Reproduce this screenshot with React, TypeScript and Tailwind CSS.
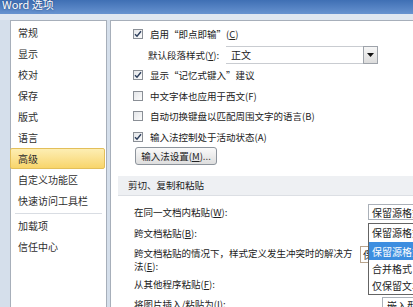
import React from "react";

const F = { fontFamily: '"Noto Sans CJK SC", "Noto Sans", sans-serif' };

function Box({ checked }: { checked?: boolean }) {
  return (
    <div className="w-[10px] h-[10px] border border-[#8a8f96] bg-gradient-to-br from-[#e4e6e9] to-[#fbfbfb] flex items-center justify-center shrink-0">
      {checked && (
        <svg width="8" height="8" viewBox="0 0 8 8">
          <path d="M1 4.2 L3 6.3 L7 1.2" stroke="#2c3e5c" strokeWidth="1.4" fill="none" />
        </svg>
      )}
    </div>
  );
}

function U({ c }: { c: string }) {
  return <span className="underline underline-offset-1">{c}</span>;
}

function CheckRow({ checked, children }: { checked?: boolean; children: React.ReactNode }) {
  return (
    <div className="h-[20.5px] flex items-center gap-[7px] pl-[22px]">
      <Box checked={checked} />
      <span>{children}</span>
    </div>
  );
}

const nav = ["常规", "显示", "校对", "保存", "版式", "语言", "高级", "自定义功能区", "快速访问工具栏"];

export default function App() {
  return (
    <div className="w-[413px] h-[307px] overflow-hidden bg-[#d5dfeb] flex flex-col relative" style={F}>
      <div className="h-[14px] shrink-0 bg-gradient-to-b from-[#3f6fb4] to-[#6793d0] overflow-hidden flex items-start pl-[2px]">
        <span className="text-[11px] leading-[9px] text-white" style={{ textShadow: "0 0 2px #1d3f70" }}>Word 选项</span>
      </div>
      <div className="h-[6px] shrink-0 bg-[#dfe7f1]" />
      <div className="flex flex-1 min-h-0">
        <div className="ml-[10px] w-[97px] bg-white border border-[#a7afba] border-b-0 pt-[1px] flex flex-col text-[10px] text-[#2e2e2e]">
          {nav.map((n) => (
            <div
              key={n}
              className={
                n === "高级"
                  ? "h-[20.5px] mr-[1px] flex items-center pl-[7px] rounded-[2px] border border-[#e3bf5a] bg-gradient-to-b from-[#fdeeb3] to-[#f8d56a] -ml-[1px]"
                  : "h-[21px] flex items-center pl-[7px]"
              }
            >
              {n}
            </div>
          ))}
          <div className="h-[1px] bg-[#d9dde3] mx-[4px] mt-[2px]" />
          <div className="h-[21px] flex items-center pl-[7px] mt-[1px]">加载项</div>
          <div className="h-[21px] flex items-center pl-[7px]">信任中心</div>
        </div>
        <div className="ml-[3px] flex-1 bg-white border-l border-t border-[#a7afba] text-[9.5px] text-[#222] relative">
          <div className="pt-[3px]">
            <CheckRow checked>
              启用“即点即输”(<U c="C" />)
            </CheckRow>
            <div className="h-[20.5px] flex items-center pl-[37px]">
              <span className="w-[78px]">
                默认段落样式(<U c="Y" />):
              </span>
              <div className="w-[152px] h-[18px] flex border-y border-[#c9ccd1]">
                <div className="flex-1 flex items-center pl-[5px] text-[10px]">正文</div>
                <div className="w-[15px] border border-[#9ea3aa] bg-gradient-to-b from-[#f6f6f6] to-[#dcdcdc] flex items-center justify-center -my-[1px]">
                  <svg width="7" height="4" viewBox="0 0 7 4">
                    <path d="M0 0 H7 L3.5 4 Z" fill="#111" />
                  </svg>
                </div>
              </div>
            </div>
            <CheckRow checked>显示“记忆式键入”建议</CheckRow>
            <CheckRow>中文字体也应用于西文(F)</CheckRow>
            <CheckRow>自动切换键盘以匹配周围文字的语言(B)</CheckRow>
            <CheckRow checked>输入法控制处于活动状态(A)</CheckRow>
          </div>
          <div className="ml-[24px] w-[82px] h-[18px] border border-[#8d949c] rounded-[3px] bg-gradient-to-b from-[#fafafa] to-[#dedede] flex items-center justify-center">
            输入法设置(<U c="M" />)...
          </div>
          <div className="mt-[11px] ml-[7px] h-[20px] bg-[#eef0f3] border-b border-[#dcdfe4] flex items-center pl-[10px]">
            剪切、复制和粘贴
          </div>
          <div className="pl-[23px] mt-[6px]">
            <div className="h-[20px] flex items-center justify-between">
              <span>
                在同一文档内粘贴(<U c="W" />):
              </span>
              <div className="w-[50px] h-[16px] border border-[#aab0b8] flex items-center pl-[3px] text-[10px] mr-[-5px] whitespace-nowrap overflow-hidden shrink-0">
                保留源格式
              </div>
            </div>
            <div className="h-[22px] flex items-center">
              跨文档粘贴(<U c="B" />):
            </div>
            <div className="h-[31px] flex items-start justify-between leading-[13px] pt-[3px]">
              <span>
                跨文档粘贴的情况下，样式定义发生冲突时的解决方
                <br />
                法(<U c="E" />):
              </span>
              <div className="w-[66px] h-[17px] border border-[#b9a48c] flex items-center pl-[2px] text-[10px] -mt-[1px] mr-[-13px] shrink-0 whitespace-nowrap overflow-hidden">
                保
              </div>
            </div>
            <div className="h-[19px] flex items-center">
              从其他程序粘贴(<U c="F" />):
            </div>
            <div className="h-[20px] flex items-start justify-between pt-[3px]">
              <span>
                将图片插入/粘贴为(<U c="I" />):
              </span>
              <div className="w-[40px] h-[16px] border border-[#aab0b8] flex items-center pl-[4px] text-[10px] mr-[-9px] shrink-0 whitespace-nowrap overflow-hidden">
                嵌入型
              </div>
            </div>
          </div>
        </div>
      </div>
      <div className="absolute left-[368px] top-[223px] w-[60px] h-[72px] bg-white border border-[#646464] text-[10px] text-[#222] flex flex-col whitespace-nowrap overflow-hidden">
        <div className="h-[18px] flex items-center pl-[3px]">保留源格式</div>
        <div className="h-[19px] flex items-center pl-[3px] bg-[#3d8ee0] text-white">保留源格式</div>
        <div className="h-[17px] flex items-center pl-[3px]">合并格式</div>
        <div className="h-[17px] flex items-center pl-[3px]">仅保留文本</div>
      </div>
    </div>
  );
}
